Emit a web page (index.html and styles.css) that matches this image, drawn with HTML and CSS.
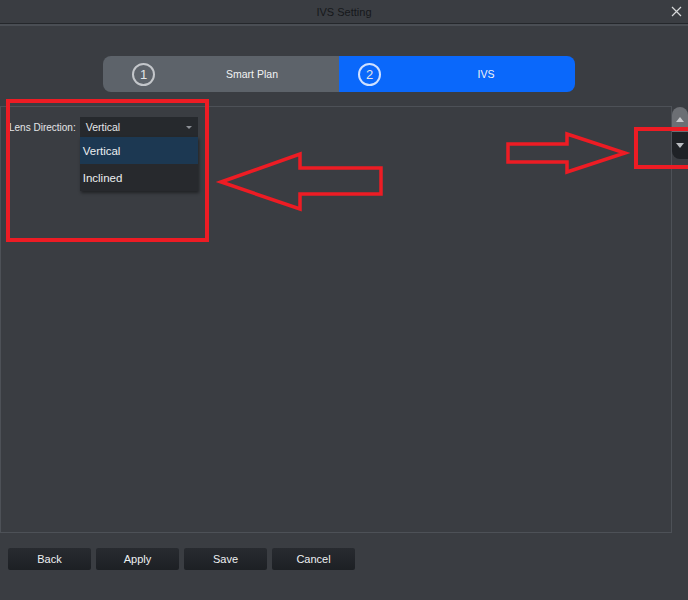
FILE: index.html
```html
<!DOCTYPE html>
<html lang="en">
<head>
  <meta charset="UTF-8">
  <title>IVS Setting</title>
  <link rel="stylesheet" href="styles.css">
</head>
<body>
  <div class="window">
    <div class="titlebar">
      <span></span>
      <span class="title">IVS Setting</span>
      <svg class="close" width="11" height="11" viewBox="0 0 11 11">
        <path d="M1 1 L10 10 M10 1 L1 10" stroke="#d6d8da" stroke-width="1.2" fill="none"/>
      </svg>
    </div>

    <div class="steps">
      <div class="step step-done">
        <span class="num">1</span>
        <span class="step-name">Smart Plan</span>
      </div>
      <div class="step step-active">
        <span class="num">2</span>
        <span class="step-name">IVS</span>
      </div>
    </div>

    <div class="body-row">
      <div class="panel">
        <div class="field">
          <label class="field-label">Lens Direction:</label>
          <div class="select">
            <div class="select-box">
              <span>Vertical</span>
              <span class="caret"></span>
            </div>
            <ul class="select-list">
              <li class="selected">Vertical</li>
              <li>Inclined</li>
            </ul>
          </div>
        </div>
      </div>
      <div class="scrollbar">
        <div class="scroll-up"><span class="tri-up"></span></div>
        <div class="scroll-down"><span class="tri-down"></span></div>
      </div>
    </div>

    <div class="actions">
      <button class="btn">Back</button>
      <button class="btn">Apply</button>
      <button class="btn">Save</button>
      <button class="btn">Cancel</button>
    </div>
  </div>

  <!-- red markup drawn on top of the screenshot -->
  <svg class="markup" width="688" height="600" viewBox="0 0 688 600">
    <g fill="none" stroke="#ed1c24" stroke-width="4">
      <rect x="8" y="101" width="199" height="139"/>
      <rect x="636" y="129" width="54" height="38"/>
    </g>
    <g fill="none" stroke="#ed1c24" stroke-width="3.5" stroke-linejoin="miter">
      <polygon points="221,182 300,154 300,168 381,168 381,194 300,194 300,209"/>
      <polygon points="508,144 567,144 567,134 625,153 567,172 567,162 508,162"/>
    </g>
  </svg>
</body>
</html>
```

FILE: styles.css
```css
/* General */
body {
  margin: 0;
  background-color: #3a3d42;
  font-family: "Liberation Sans", Arial, sans-serif;
  font-size: 11px;
  color: #e4e6e8;
}

.window {
  width: 688px;
  height: 600px;
}

/* Title bar */
.titlebar {
  display: grid;
  grid-template-columns: 1fr auto 1fr;
  align-items: center;
  height: 23px;
  border-bottom: 1px solid #24272b;
  box-shadow: 0 2px 0 #4a4e54;
}

.title {
  color: #16181b;
  font-size: 11px;
}

.close {
  justify-self: end;
  margin-right: 6px;
}

/* Steps */
.steps {
  display: flex;
  width: 472px;
  height: 36px;
  margin: 32px 0 0 103px;
  border-radius: 8px;
  overflow: hidden;
}

.step {
  flex: 1;
  display: flex;
  align-items: center;
  color: #f2f3f5;
  font-size: 10.5px;
}

.step-done {
  background-color: #5d636a;
}

.step-active {
  background-color: #0a68fb;
}

.num {
  width: 19px;
  height: 19px;
  border: 2px solid #c3c6ca;
  border-radius: 50%;
  display: flex;
  align-items: center;
  justify-content: center;
  font-size: 13px;
  color: #e2e4e7;
}

.step-done .num {
  margin-left: 29px;
}

.step-active .num {
  margin-left: 19px;
  border-color: #cfe0ff;
}

.step-name {
  flex: 1;
  text-align: center;
}

.step-done .step-name {
  padding-left: 10px;
}

.step-active .step-name {
  padding-left: 16px;
}

/* Panel */
.body-row {
  display: flex;
  margin-top: 14px;
}

.panel {
  width: 672px;
  height: 427px;
  border: 1px solid #4d5157;
  padding: 10px 0 0 8px;
  box-sizing: border-box;
}

.field {
  display: flex;
  align-items: center;
  gap: 4px;
}

.field-label {
  color: #e4e6e8;
  font-size: 10px;
}

.select {
  position: relative;
  width: 118px;
}

.select-box {
  display: flex;
  justify-content: space-between;
  align-items: center;
  height: 20px;
  padding: 0 6px;
  background-color: #26292d;
  color: #e6e8ea;
  font-size: 10.5px;
}

.caret {
  width: 0;
  height: 0;
  border-left: 3px solid transparent;
  border-right: 3px solid transparent;
  border-top: 3px solid #8c9096;
}

.select-list {
  position: absolute;
  top: 20px;
  left: 0;
  width: 118px;
  margin: 0;
  padding: 0;
  list-style: none;
  background-color: #27292d;
  box-shadow: 1px 2px 3px rgba(0, 0, 0, 0.45);
  z-index: 1;
}

.select-list li {
  height: 27px;
  line-height: 29px;
  padding-left: 3px;
  font-size: 11.5px;
  color: #eceef0;
}

.select-list li.selected {
  background-color: #1c3852;
}

/* Scrollbar */
.scrollbar {
  width: 16px;
}

.scroll-up {
  height: 25px;
  margin-top: 1px;
  background-color: #6c6f74;
  border-radius: 8px 8px 0 0;
  display: flex;
  justify-content: center;
  align-items: center;
}

.scroll-down {
  height: 27px;
  background-color: #1f2226;
  border-radius: 0 0 0 8px;
  display: flex;
  justify-content: center;
  align-items: center;
}

.tri-up {
  border-left: 4px solid transparent;
  border-right: 4px solid transparent;
  border-bottom: 5px solid #c5c7ca;
}

.tri-down {
  border-left: 4px solid transparent;
  border-right: 4px solid transparent;
  border-top: 5px solid #b9bcc0;
}

/* Buttons */
.actions {
  display: flex;
  gap: 5px;
  margin: 15px 0 0 8px;
}

.btn {
  width: 83px;
  height: 22px;
  border: none;
  border-radius: 2px;
  background: linear-gradient(#282b30, #1d2024);
  color: #eef0f2;
  font-family: "Liberation Sans", Arial, sans-serif;
  font-size: 11px;
  padding: 0;
}

/* Red markup */
.markup {
  position: absolute;
  top: 0;
  left: 0;
  pointer-events: none;
}
```
